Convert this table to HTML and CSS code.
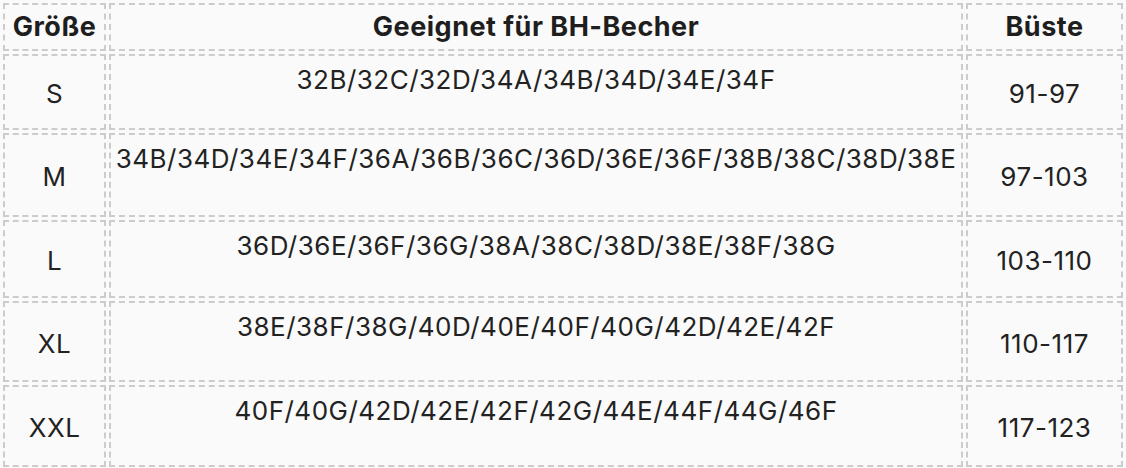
FILE: index.html
```html
<!DOCTYPE html>
<html lang="de">
<head>
<meta charset="utf-8">
<title>Größentabelle</title>
<link rel="stylesheet" href="styles.css">
</head>
<body>
<table class="size-table">
  <colgroup>
    <col class="col-size">
    <col class="col-cup">
    <col class="col-bust">
  </colgroup>
  <thead>
    <tr class="row-head">
      <th>Größe</th>
      <th>Geeignet für BH-Becher</th>
      <th>Büste</th>
    </tr>
  </thead>
  <tbody>
    <tr class="row-s">
      <td>S</td>
      <td class="cups">32B/32C/32D/34A/34B/34D/34E/34F</td>
      <td>91-97</td>
    </tr>
    <tr class="row-m">
      <td>M</td>
      <td class="cups">34B/34D/34E/34F/36A/36B/36C/36D/36E/36F/38B/38C/38D/38E</td>
      <td>97-103</td>
    </tr>
    <tr class="row-l">
      <td>L</td>
      <td class="cups">36D/36E/36F/36G/38A/38C/38D/38E/38F/38G</td>
      <td>103-110</td>
    </tr>
    <tr class="row-xl">
      <td>XL</td>
      <td class="cups">38E/38F/38G/40D/40E/40F/40G/42D/42E/42F</td>
      <td>110-117</td>
    </tr>
    <tr class="row-xxl">
      <td>XXL</td>
      <td class="cups">40F/40G/42D/42E/42F/42G/44E/44F/44G/46F</td>
      <td>117-123</td>
    </tr>
  </tbody>
</table>
</body>
</html>
```

FILE: styles.css
```css
html, body {
  margin: 0;
  padding: 0;
  background: #fafafa;
}

body {
  font-family: Inter, "Noto Sans", "Liberation Sans", sans-serif;
  color: #222222;
}

.size-table {
  width: 100%;
  table-layout: fixed;
  border-collapse: separate;
  border-spacing: 3px;
  font-size: 26px;
  letter-spacing: 0.5px;
}

.col-size { width: 103px; }
.col-bust { width: 157px; }

.size-table th,
.size-table td {
  border: 2px dashed #cccccc;
  background: #fafafa;
  text-align: center;
  vertical-align: middle;
  padding: 4px 2px 0;
  white-space: nowrap;
  line-height: 1.2;
}

.size-table th {
  font-size: 27px;
  font-weight: 700;
  color: #1e1e1e;
  padding-top: 1px;
  height: 43px;
}

.size-table td.cups {
  vertical-align: top;
  padding-top: 8px;
}

.row-s td { height: 64px; }
.row-m td { height: 72px; }
.row-l td { height: 66px; }
.row-xl td { height: 69px; }
.row-xxl td { height: 70px; }
```
